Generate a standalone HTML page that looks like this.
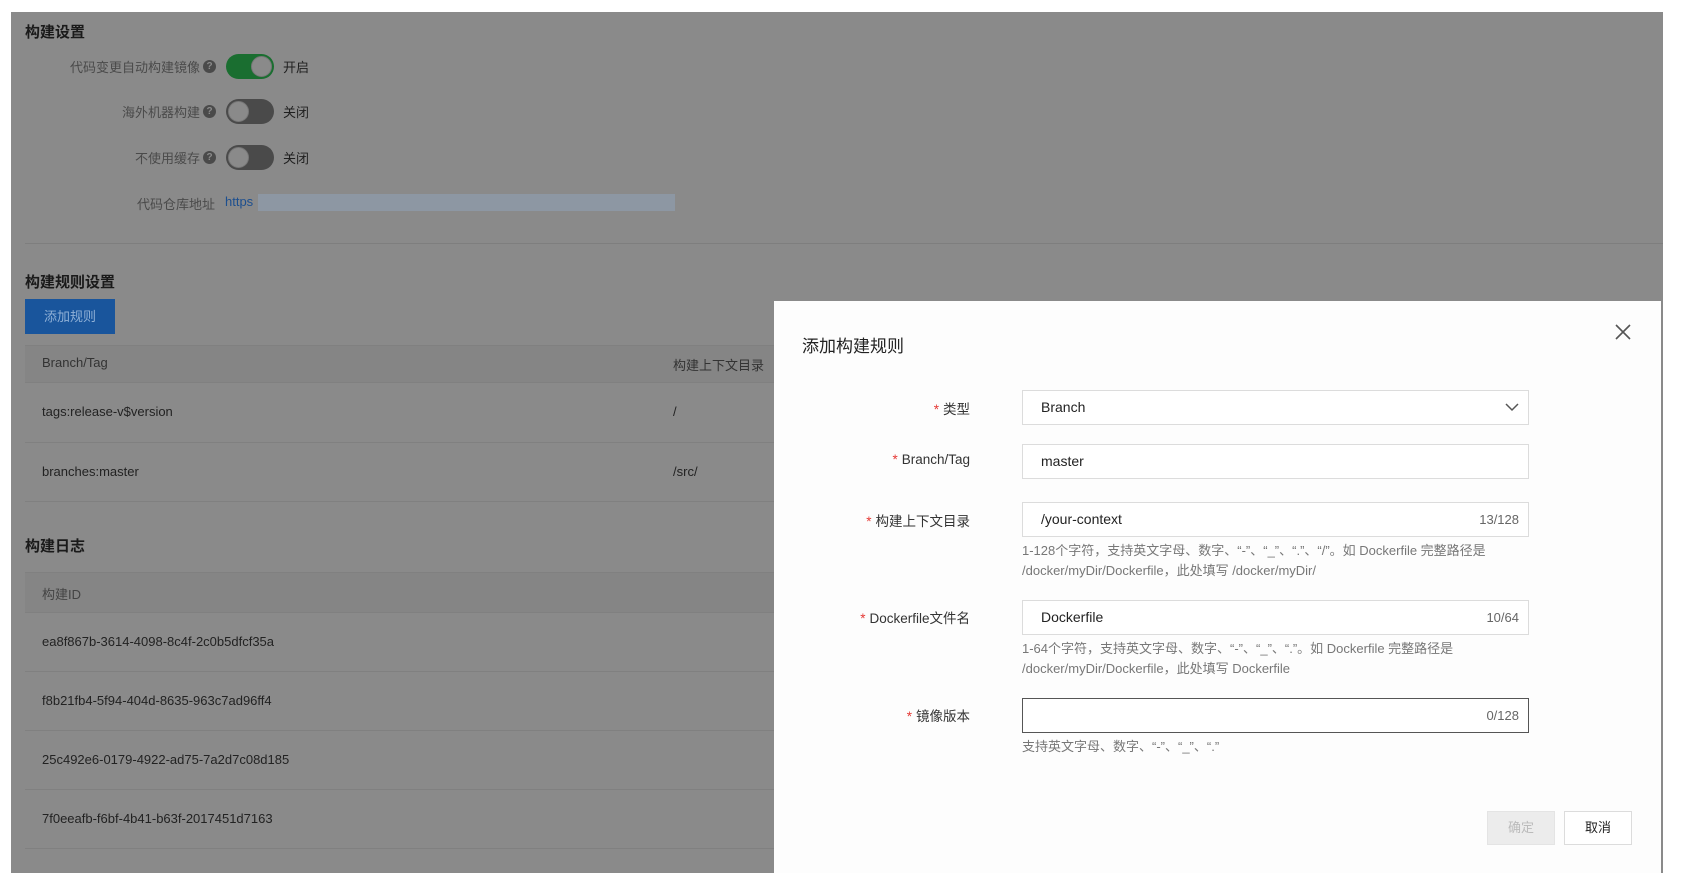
<!DOCTYPE html>
<html><head><meta charset="utf-8"><style>
*{box-sizing:border-box;margin:0;padding:0}
body{width:1684px;height:896px;background:#fff;position:relative;overflow:hidden;font-family:"Liberation Sans","Noto Sans CJK SC",sans-serif;font-size:13px;color:#222}
.a{position:absolute;white-space:nowrap}
#bg{position:absolute;left:11px;top:12px;width:1652px;height:861px;background:#8a8a8a}
.h{font-weight:bold;font-size:15px;color:#1a1a1a}
.lb{color:#4a4a4a;text-align:right;width:200px;left:0}
.q{width:13px;height:13px;border-radius:50%;background:#4a4a4a;color:#8a8a8a;font-size:10px;text-align:center;line-height:13px;font-weight:bold}
.tg{width:48px;height:25px;border-radius:13px;background:#4a4a4a}
.tg i{position:absolute;width:21px;height:21px;border-radius:50%;background:#8a8a8a;top:2px;left:2px;border:1px solid #777}
.tg.on{background:#1a6e30}.tg.on i{left:25px}
.row{position:absolute;left:25px;width:780px;border-bottom:1px solid #808080}
.inp{position:absolute;left:1022px;width:507px;height:35px;border:1px solid #dcdcdc;background:#fff;font-size:14px;color:#222;padding-left:18px;line-height:33px}
.cnt{position:absolute;right:9px;top:0;color:#666;font-size:13px}
.ml{position:absolute;right:714px;font-size:13.5px;color:#333;text-align:right}
.ml b{color:#e53935;font-weight:normal;margin-right:4px}
.hp{position:absolute;left:1022px;font-size:13px;color:#777;line-height:20px}
</style></head><body>
<div id="bg"></div>
<div class="a h" style="left:25px;top:21px">构建设置</div>
<div class="a lb" style="top:57px">代码变更自动构建镜像</div><div class="a q" style="left:203px;top:60px">?</div><div class="a tg on" style="left:226px;top:54px"><i></i></div><div class="a" style="left:283px;top:57px;color:#1f1f1f">开启</div>
<div class="a lb" style="top:102px">海外机器构建</div><div class="a q" style="left:203px;top:105px">?</div><div class="a tg" style="left:226px;top:99px"><i></i></div><div class="a" style="left:283px;top:102px;color:#1f1f1f">关闭</div>
<div class="a lb" style="top:148px">不使用缓存</div><div class="a q" style="left:203px;top:151px">?</div><div class="a tg" style="left:226px;top:145px"><i></i></div><div class="a" style="left:283px;top:148px;color:#1f1f1f">关闭</div>
<div class="a lb" style="top:194px;width:215px">代码仓库地址</div><div class="a" style="left:225px;top:194px;color:#1d4f8f">https</div><div class="a" style="left:258px;top:194px;width:417px;height:17px;background:#8d97a3"></div>
<div class="a" style="left:25px;top:243px;width:1638px;height:1px;background:#7e7e7e"></div>
<div class="a h" style="left:25px;top:271px">构建规则设置</div>
<div class="a" style="left:25px;top:299px;width:90px;height:35px;background:#19559c;color:#8fb0d6;text-align:center;line-height:35px">添加规则</div>
<div class="row" style="top:345px;height:38px;background:#858585;border-top:1px solid #808080"></div>
<div class="a" style="left:42px;top:355px;color:#333">Branch/Tag</div><div class="a" style="left:673px;top:355px;color:#333">构建上下文目录</div>
<div class="row" style="top:383px;height:60px"></div>
<div class="a" style="left:42px;top:404px">tags:release-v$version</div><div class="a" style="left:673px;top:404px">/</div>
<div class="row" style="top:443px;height:59px"></div>
<div class="a" style="left:42px;top:464px">branches:master</div><div class="a" style="left:673px;top:464px">/src/</div>
<div class="a h" style="left:25px;top:535px">构建日志</div>
<div class="row" style="top:572px;height:41px;background:#858585;border-top:1px solid #808080"></div>
<div class="a" style="left:42px;top:584px;color:#444">构建ID</div>
<div class="row" style="top:613px;height:59px"></div>
<div class="row" style="top:672px;height:59px"></div>
<div class="row" style="top:731px;height:59px"></div>
<div class="row" style="top:790px;height:59px"></div>
<div class="a" style="left:42px;top:634px">ea8f867b-3614-4098-8c4f-2c0b5dfcf35a</div>
<div class="a" style="left:42px;top:693px">f8b21fb4-5f94-404d-8635-963c7ad96ff4</div>
<div class="a" style="left:42px;top:752px">25c492e6-0179-4922-ad75-7a2d7c08d185</div>
<div class="a" style="left:42px;top:811px">7f0eeafb-f6bf-4b41-b63f-2017451d7163</div>

<div class="a" style="left:774px;top:301px;width:887px;height:572px;background:#fdfdfd"></div>
<div class="a" style="left:802px;top:332px;font-size:17px;color:#222">添加构建规则</div>
<svg class="a" style="left:1615px;top:324px" width="16" height="16" viewBox="0 0 16 16"><path d="M1 1L15 15M15 1L1 15" stroke="#555" stroke-width="1.6"/></svg>
<div class="ml" style="top:398px"><b>*</b>类型</div>
<div class="inp" style="top:390px">Branch<svg style="position:absolute;right:9px;top:12px" width="14" height="9" viewBox="0 0 14 9"><path d="M1 1L7 7L13 1" fill="none" stroke="#555" stroke-width="1.5"/></svg></div>
<div class="ml" style="top:452px"><b>*</b>Branch/Tag</div>
<div class="inp" style="top:444px">master</div>
<div class="ml" style="top:510px"><b>*</b>构建上下文目录</div>
<div class="inp" style="top:502px">/your-context<span class="cnt" style="line-height:33px">13/128</span></div>
<div class="hp" style="top:541px">1-128个字符，支持英文字母、数字、“-”、“_”、“.”、“/”。如 Dockerfile 完整路径是<br>/docker/myDir/Dockerfile，此处填写 /docker/myDir/</div>
<div class="ml" style="top:607px"><b>*</b>Dockerfile文件名</div>
<div class="inp" style="top:600px">Dockerfile<span class="cnt" style="line-height:33px">10/64</span></div>
<div class="hp" style="top:639px">1-64个字符，支持英文字母、数字、“-”、“_”、“.”。如 Dockerfile 完整路径是<br>/docker/myDir/Dockerfile，此处填写 Dockerfile</div>
<div class="ml" style="top:705px"><b>*</b>镜像版本</div>
<div class="inp" style="top:698px;border-color:#555"><span class="cnt" style="line-height:33px">0/128</span></div>
<div class="hp" style="top:737px">支持英文字母、数字、“-”、“_”、“.”</div>
<div class="a" style="left:1487px;top:811px;width:68px;height:34px;background:#ececec;border:1px solid #e4e4e4;color:#bbb;text-align:center;line-height:32px">确定</div>
<div class="a" style="left:1564px;top:811px;width:68px;height:34px;background:#fff;border:1px solid #dcdcdc;color:#222;text-align:center;line-height:32px">取消</div>
</body></html>
